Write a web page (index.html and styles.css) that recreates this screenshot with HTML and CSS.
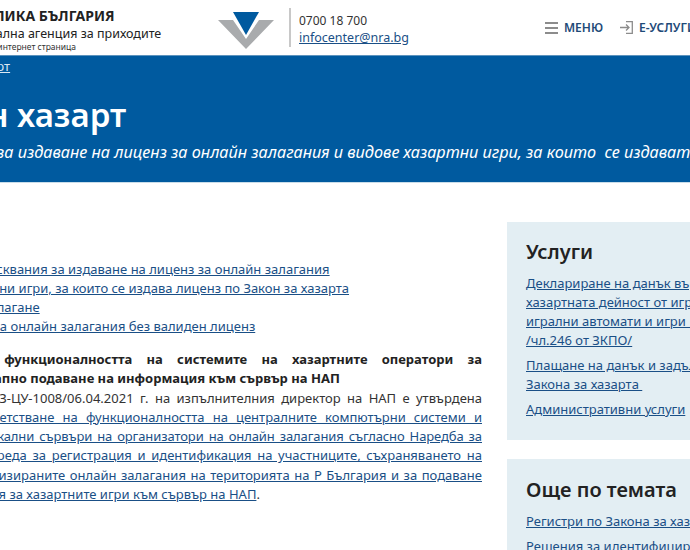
FILE: index.html
```html
<!DOCTYPE html>
<html lang="bg">
<head>
<meta charset="utf-8">
<title>Онлайн хазарт</title>
<link rel="stylesheet" href="styles.css">
</head>
<body>
<div class="page">
  <header class="top">
    <div class="brand">
      <div class="b1">РЕПУБЛИКА БЪЛГАРИЯ</div>
      <div class="b2">Национална агенция за приходите</div>
      <div class="b3">Официална интернет страница</div>
    </div>
    <svg class="logo" viewBox="0 0 56 37" width="56" height="37">
      <path fill="#a9abad" d="M0 8H15L28 27L41 8H56L28 37Z"/>
      <path fill="#005a9f" d="M15 0H41L28 23Z"/>
    </svg>
    <div class="contact">
      <div class="phone">0700 18 700</div>
      <a href="#">infocenter@nra.bg</a>
    </div>
    <nav class="nav">
      <a class="nav-item" href="#">
        <svg viewBox="0 0 13 12" width="13" height="12"><path fill="#8c8c8c" d="M0 0H13V2H0ZM0 5H13V7H0ZM0 10H13V12H0Z"/></svg>
        <span>МЕНЮ</span>
      </a>
      <a class="nav-item" href="#">
        <svg viewBox="0 0 13 13" width="13" height="13"><path fill="none" stroke="#8c8c8c" stroke-width="1.3" d="M6 .7H12.3V12.3H6M0 6.5H8.5M6 3.5L9 6.5L6 9.5"/></svg>
        <span>Е-УСЛУГИ</span>
      </a>
    </nav>
  </header>
  <section class="hero">
    <a class="crumb" href="#">Хазарт</a>
    <h1>Онлайн хазарт</h1>
    <p class="lead">Реда за издаване на лиценз за онлайн залагания и видове хазартни игри, за които&nbsp; се издават лицензи</p>
  </section>
  <main class="body">
    <article class="content">
      <ul class="links">
        <li class="in"><a href="#">Изисквания за издаване на лиценз за онлайн залагания</a></li>
        <li><a href="#">Хазартни игри, за които се издава лиценз по Закон за хазарта</a></li>
        <li class="out"><a href="#">Онлайн залагане</a></li>
        <li><a href="#">Игри на онлайн залагания без валиден лиценз</a></li>
      </ul>
      <div class="para">
        <b class="ln">Тест функционалността на системите на хазартните оператори за</b>
        <b class="ln end">Поетапно подаване на информация към сървър на НАП</b>
        <span class="ln">С № З-ЦУ-1008/06.04.2021 г. на изпълнителния директор на НАП е утвърдена</span>
        <a class="ln" href="#">Съответстване на функционалността на централните компютърни системи и</a>
        <a class="ln tight" href="#">на локални сървъри на организатори на онлайн залагания съгласно Наредба за</a>
        <a class="ln" href="#">чрез реда за регистрация и идентификация на участниците, съхраняването на</a>
        <a class="ln" href="#">организираните онлайн залагания на територията на Р България и за подаване</a>
        <span class="ln end out"><a href="#">информация за хазартните игри към сървър на НАП</a>.</span>
      </div>
    </article>
    <aside class="side">
      <section class="card">
        <h2>Услуги</h2>
        <a href="#">Деклариране на данък върху приходите от<br>хазартната дейност от игрални зали с<br>игрални автомати и игри&nbsp;&nbsp;&nbsp;&nbsp;&nbsp;&nbsp;казино<br>/чл.246 от ЗКПО/</a>
        <a href="#">Плащане на данък и задължения по<br>Закона за хазарта&nbsp;</a>
        <a href="#">Административни услуги</a>
      </section>
      <section class="card">
        <h2>Още по темата</h2>
        <a href="#">Регистри по Закона за хазарта</a>
        <a href="#">Решения за идентифициране</a>
      </section>
    </aside>
  </main>
</div>
</body>
</html>
```
FILE: styles.css
```css
html, body { margin: 0; height: 550px; overflow: hidden; background: #fff; }
body { font-family: "Noto Sans", "Open Sans", sans-serif; color: #222; font-size: 14px; }
a { color: #1a4f86; }
.page { width: 1000px; margin-left: -90px; }
.top { height: 55px; display: flex; align-items: center; background: #fff; border-bottom: 1px solid #5d93bd; }
.brand { width: 269px; margin-left: 39px; flex: none; color: #222; line-height: 1; white-space: nowrap; padding-top: 5px; }
.b1 { font-weight: 700; font-size: 14px; margin-bottom: 5px; }
.b2 { font-size: 12.5px; margin-bottom: 3px; }
.b3 { font-size: 8.5px; margin-left: -2px; color: #333; }
.logo { flex: none; margin-top: 6px; }
.contact { flex: none; margin-left: 15px; padding: 4px 0 0 8px; border-left: 2px solid #c8c8c8; line-height: 17px; height: 35px; font-size: 12.5px; color: #333; }
.phone { font-size: 12px; }
.nav { display: flex; gap: 17px; margin-left: 136px; align-items: center; }
.nav-item { display: flex; gap: 6px; align-items: center; text-decoration: none; font-weight: 600; font-size: 12px; color: #1e4a78; }
.hero { background: #005a9f; height: 126px; color: #fff; border-bottom: 1px solid #c9dde9; padding-left: 52px; overflow: hidden; }
.crumb { display: block; margin-left: 6px; color: #dbe8f3; font-size: 13px; line-height: 20px; }
h1 { margin: 19px 0 0 -82px; font-size: 33px; line-height: 40px; font-weight: 600; white-space: nowrap; }
.lead { margin: 5px 0 0 -4px; font-size: 16.25px; line-height: 24px; font-style: italic; white-space: nowrap; }
.body { display: flex; padding-left: 52px; }
.content { width: 520px; flex: none; padding-top: 77px; font-size: 13px; }
.links { list-style: none; margin: 0 0 0 -5px; padding: 0; line-height: 19px; }
.links .in { text-indent: 15px; }
.links .out { text-indent: -26px; }
.para { margin-top: 14px; line-height: 19.25px; color: #333; }
.para .out { text-indent: -38px; }
.ln { display: block; text-align: justify; text-align-last: justify; }
.ln.end { text-align-last: left; }
.ln.tight { letter-spacing: -0.1px; }
b.ln { color: #222; }
.side { margin-left: 25px; margin-top: 39px; }
.card { width: 300px; background: #e3eef3; padding: 16px 19px 15px; margin-bottom: 19px; white-space: nowrap; }
.card + .card { padding-top: 17px; }
.card h2 { margin: 0 0 8px; font-size: 20px; line-height: 28px; font-weight: 600; color: #222; }
.card a { display: block; font-size: 13px; line-height: 19px; margin-bottom: 6px; }
```
